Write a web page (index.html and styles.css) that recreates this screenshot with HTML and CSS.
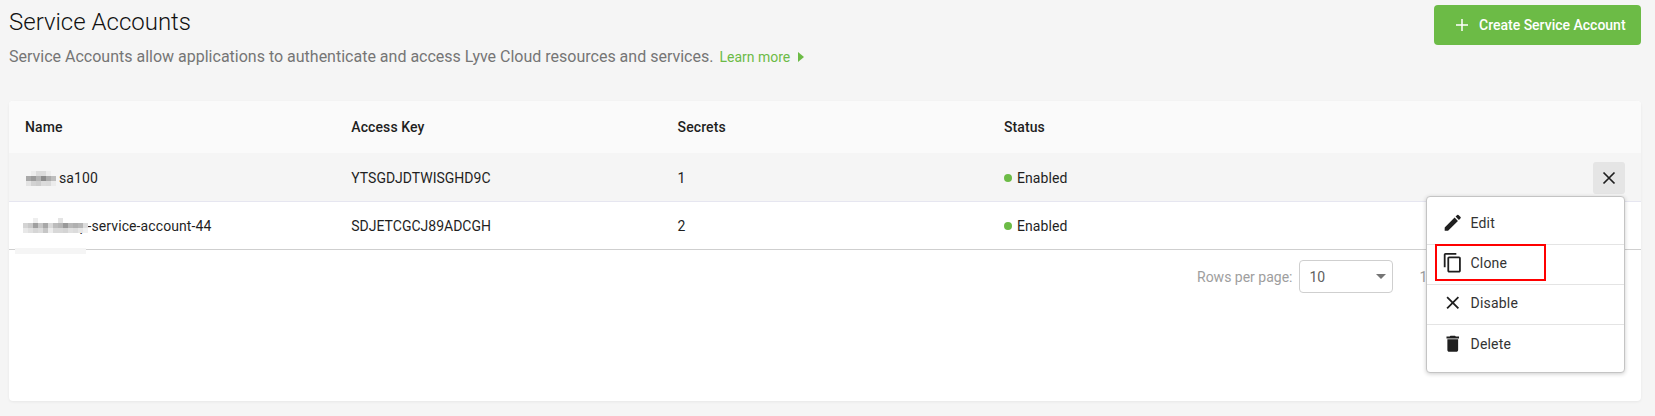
FILE: index.html
```html
<!DOCTYPE html>
<html lang="en">
<head>
<meta charset="utf-8">
<title>Service Accounts</title>
<link rel="stylesheet" href="styles.css">
</head>
<body>
<header class="page-head">
  <div class="head-text">
    <h1 class="title">Service Accounts</h1>
    <p class="desc">Service Accounts allow applications to authenticate and access Lyve Cloud resources and services.<a class="learn" href="#">Learn more<svg class="caret" viewBox="0 0 6 10"><path d="M0 0l6 5-6 5z"/></svg></a></p>
  </div>
  <button class="create"><svg viewBox="0 0 12 12" width="12" height="12"><path d="M6 0v12M0 6h12" stroke="#fff" stroke-width="1.5"/></svg>Create Service Account</button>
</header>
<main class="card">
  <div class="row head">
    <div>Name</div><div>Access Key</div><div>Secrets</div><div>Status</div>
  </div>
  <div class="row hover">
    <div class="name"><svg class="blur b1" viewBox="0 0 30 15" width="30" height="15" shape-rendering="crispEdges">
      <g fill="#ededed"><rect x="5" width="5" height="5"/><rect x="20" width="5" height="5"/></g>
      <g fill="#dcdcdc"><rect x="10" width="5" height="5"/><rect x="15" width="5" height="5"/></g>
      <rect y="5" width="5" height="5" fill="#a9a9a9"/><rect x="5" y="5" width="5" height="5" fill="#9b9b9b"/><rect x="10" y="5" width="5" height="5" fill="#b3b3b3"/><rect x="15" y="5" width="5" height="5" fill="#8c8c8c"/><rect x="20" y="5" width="5" height="5" fill="#ababab"/><rect x="25" y="5" width="5" height="5" fill="#bdbdbd"/>
      <rect y="10" width="5" height="5" fill="#e3e3e3"/><rect x="5" y="10" width="5" height="5" fill="#d2d2d2"/><rect x="10" y="10" width="5" height="5" fill="#cdcdcd"/><rect x="15" y="10" width="5" height="5" fill="#dcdcdc"/><rect x="20" y="10" width="5" height="5" fill="#dadada"/><rect x="25" y="10" width="5" height="5" fill="#ececec"/>
    </svg>sa100</div>
    <div class="key">YTSGDJDTWISGHD9C</div>
    <div>1</div>
    <div class="status"><i class="dot"></i>Enabled</div>
    <button class="close"><svg viewBox="0 0 14 14" width="14" height="14"><path d="M1.5 1.5l11 11M12.5 1.5l-11 11" stroke="#1f1f1f" stroke-width="1.7"/></svg></button>
  </div>
  <div class="row last">
    <div class="name"><svg class="blur b2" viewBox="0 0 65 15" width="65" height="15" shape-rendering="crispEdges">
      <rect x="10" width="5" height="5" fill="#eeeeee"/><rect x="35" width="5" height="5" fill="#e4e4e4"/>
      <rect y="5" width="5" height="5" fill="#d4d4d4"/><rect x="5" y="5" width="5" height="5" fill="#c9c9c9"/><rect x="10" y="5" width="5" height="5" fill="#a0a0a0"/><rect x="15" y="5" width="5" height="5" fill="#c6c6c6"/><rect x="20" y="5" width="5" height="5" fill="#a8a8a8"/><rect x="25" y="5" width="5" height="5" fill="#d9d9d9"/><rect x="30" y="5" width="5" height="5" fill="#bcbcbc"/><rect x="35" y="5" width="5" height="5" fill="#b5b5b5"/><rect x="40" y="5" width="5" height="5" fill="#9a9a9a"/><rect x="45" y="5" width="5" height="5" fill="#b8b8b8"/><rect x="50" y="5" width="5" height="5" fill="#b0b0b0"/><rect x="55" y="5" width="5" height="5" fill="#b8b8b8"/><rect x="60" y="5" width="5" height="5" fill="#dddddd"/>
      <rect y="10" width="5" height="5" fill="#e8e8e8"/><rect x="5" y="10" width="5" height="5" fill="#e0e0e0"/><rect x="10" y="10" width="5" height="5" fill="#d6d6d6"/><rect x="15" y="10" width="5" height="5" fill="#dcdcdc"/><rect x="20" y="10" width="5" height="5" fill="#c6c6c6"/><rect x="25" y="10" width="5" height="5" fill="#ececec"/><rect x="30" y="10" width="5" height="5" fill="#d8d8d8"/><rect x="35" y="10" width="5" height="5" fill="#d8d8d8"/><rect x="40" y="10" width="5" height="5" fill="#d4d4d4"/><rect x="45" y="10" width="5" height="5" fill="#e0e0e0"/><rect x="50" y="10" width="5" height="5" fill="#dcdcdc"/><rect x="55" y="10" width="5" height="5" fill="#e6e6e6"/><rect x="60" y="10" width="5" height="5" fill="#f0f0f0"/>
    </svg>p-service-account-44</div>
    <div class="key">SDJETCGCJ89ADCGH</div>
    <div>2</div>
    <div class="status"><i class="dot"></i>Enabled</div>
    <span class="smudge"></span>
  </div>
  <div class="pager">
    <span class="rpp">Rows per page:</span>
    <div class="select"><span>10</span><i class="arrow"></i></div>
    <span class="range">1</span>
  </div>
  <div class="menu">
    <div class="item"><svg viewBox="0 0 24 24"><path d="M3 17.25V21h3.75L17.81 9.94l-3.75-3.75L3 17.25zM20.71 7.04a1 1 0 0 0 0-1.41l-2.34-2.34a1 1 0 0 0-1.41 0l-1.83 1.83 3.75 3.75 1.83-1.83z"/></svg>Edit</div>
    <div class="item outlined"><svg viewBox="0 0 24 24"><path d="M16 1H4c-1.1 0-2 .9-2 2v14h2V3h12V1zm3 4H8c-1.1 0-2 .9-2 2v14c0 1.1.9 2 2 2h11c1.1 0 2-.9 2-2V7c0-1.1-.9-2-2-2zm0 16H8V7h11v14z"/></svg>Clone</div>
    <div class="item"><svg viewBox="0 0 24 24"><path d="M19 6.41L17.59 5 12 10.59 6.41 5 5 6.41 10.59 12 5 17.59 6.41 19 12 13.41 17.59 19 19 17.59 13.41 12z"/></svg>Disable</div>
    <div class="item"><svg viewBox="0 0 24 24"><path d="M6 19c0 1.1.9 2 2 2h8c1.1 0 2-.9 2-2V7H6v12zM19 4h-3.5l-1-1h-5l-1 1H5v2h14V4z"/></svg>Delete</div>
  </div>
</main>
</body>
</html>
```
FILE: styles.css
```css
*, *::after { box-sizing: border-box; }
html, body { margin: 0; height: 100%; }
body {
  background: #f5f5f5;
  font-family: Roboto, "Liberation Sans", sans-serif;
  color: #1f1f1f;
  padding: 0 14px 0 9px;
  overflow: hidden;
}
.page-head { display: flex; justify-content: space-between; height: 101px; }
.title { margin: 6px 0 0; font-size: 24px; line-height: 32px; font-weight: 300; color: #111; }
.desc { margin: 7px 0 0; font-size: 16px; line-height: 24px; color: #757575; }
.learn { margin-left: 6px; font-size: 14px; color: #6cbb46; text-decoration: none; }
.caret { margin-left: 8px; fill: #6cbb46; width: 6px; height: 10px; }
.create {
  margin-top: 5px; height: 40px; width: 207px; padding: 0 0 0 22px; border: 0; border-radius: 4px;
  background: #6cbb46; color: #fff; font: 500 14px Roboto, sans-serif;
  display: flex; align-items: center; gap: 11px;
}
.card {
  position: relative; height: 300px; background: #fff; border-radius: 4px;
  box-shadow: 0 1px 3px rgba(0,0,0,.06);
}
.row {
  position: relative; display: grid; grid-template-columns: 326.3px 326.3px 326.3px 1fr;
  align-items: center; padding-left: 16px; font-size: 14px; letter-spacing: 0.1px;
}
.head { height: 52px; background: #fafafa; font-weight: 500; border-radius: 4px 4px 0 0; }
.hover { height: 49px; padding-top: 2px; background: #f5f5f5; border-bottom: 1px solid #e6e6f0; }
.last { height: 48px; border-bottom: 1px solid #cfcfcf; }
.key { letter-spacing: 0; }
.name { display: flex; align-items: center; }
.blur { position: relative; z-index: 1; flex: none; }
.b1 { margin: 0 3px 0 1px; }
.b2 { margin: 0 -8.5px 0 -2px; }
.status { display: flex; align-items: center; gap: 5px; }
.dot { width: 8px; height: 8px; border-radius: 50%; background: #6cbb46; }
.close {
  position: absolute; right: 16px; top: 9px; width: 32px; height: 32px; padding: 0;
  border: 0; border-radius: 3px; background: #e5e5e5;
  display: flex; align-items: center; justify-content: center;
}
.smudge { position: absolute; left: 6px; top: 46px; width: 71px; height: 6px; background: #f5f5f5; z-index: 1; }
.pager { display: flex; align-items: center; height: 43px; padding: 10px 0 0 1188px; font-size: 14px; color: #9e9e9e; }
.select {
  display: flex; align-items: center; justify-content: space-between; flex: none;
  width: 94px; height: 33px; margin-left: 7px; padding: 0 6px 0 9px;
  border: 1px solid #cfcfcf; border-radius: 4px; color: #616161; font-size: 14px;
}
.arrow { width: 0; height: 0; border: 5px solid transparent; border-top: 5px solid #757575; border-bottom: 0; }
.range { margin-left: 26px; }
.menu {
  position: absolute; left: 1417px; top: 95px; width: 199px; height: 177px; padding-top: 8px;
  background: #fff; border-radius: 4px; border: 1px solid #c4c4c4;
  box-shadow: 0 1px 4px rgba(0,0,0,.2);
}
.item {
  position: relative; display: flex; align-items: center; gap: 7px; height: 40px; padding: 0 0 3px 15px;
  font-size: 14px; letter-spacing: .2px; color: #333; border-bottom: 1px solid #e4e4e4;
}
.item:last-child { border-bottom: 0; }
.item svg { fill: #1f1f1f; width: 21.5px; height: 21.5px; flex: none; }
.outlined::after {
  content: ""; position: absolute; left: 8px; top: -1px; width: 111px; height: 37px; border: 2px solid #f00;
}
```
